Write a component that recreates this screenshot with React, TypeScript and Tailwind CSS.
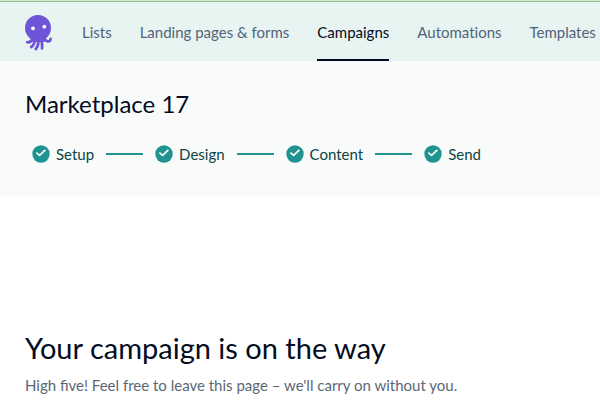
import { Fragment } from "react";
import { clsx } from "clsx";

const navigation = [
  { name: "Lists", href: "#lists" },
  { name: "Landing pages & forms", href: "#landing-pages" },
  { name: "Campaigns", href: "#campaigns" },
  { name: "Automations", href: "#automations" },
  { name: "Templates", href: "#templates" },
];

const steps = ["Setup", "Design", "Content", "Send"];

function OctopusLogo() {
  return (
    <svg viewBox="0 0 28 36" className="h-9 w-7" aria-hidden="true">
      <g stroke="#6e54d7" strokeWidth="2.8" strokeLinecap="round" strokeLinejoin="round" fill="none">
        <path d="M8.5 23.5C7.5 26.5 5.5 27.6 3.3 27.2" />
        <path d="M11 24C10.8 28 9.5 30.5 7.2 32" />
        <path d="M14.5 24C14.6 28.5 13.7 32 11.8 34" />
        <path d="M17.8 24C17.4 27.5 18.6 30.5 18 33.4" />
        <path d="M20.2 22C20.2 25.5 23.2 27 25.2 26.2C26.2 25.8 26.6 25 26.6 24" />
      </g>
      <path d="M6 20H22L20.5 27L8 27Z" fill="#6e54d7" />
      <circle cx="14" cy="13" r="13" fill="#6e54d7" />
      <circle cx="9" cy="13.3" r="1.9" fill="#fff" />
      <circle cx="20.3" cy="11.7" r="1.9" fill="#fff" />
    </svg>
  );
}

function StepCheck() {
  return (
    <svg viewBox="0 0 18 18" className="size-[18px] shrink-0" aria-hidden="true">
      <circle cx="9" cy="9" r="8.7" fill="#1f938f" />
      <path d="M4.4 7.6L7.6 10.4L13.4 4.9" fill="none" stroke="#fff" strokeWidth="1.7" />
    </svg>
  );
}

export default function App() {
  return (
    <div className="min-h-screen overflow-x-hidden bg-white font-['Lato',sans-serif] text-[#040c22]">
      <header className="border-t border-[#cfe8cf] bg-[#e7f4f2]">
        <div className="h-px bg-[#96bd98]" />
        <nav className="flex h-[59px] items-center gap-7 pl-6 whitespace-nowrap">
          <a href="#home" aria-label="Home" className="mr-0.5 shrink-0 pt-0.5">
            <OctopusLogo />
          </a>
          {navigation.map((item) => {
            const isActive = item.name === "Campaigns";
            return (
              <a
                key={item.name}
                href={item.href}
                aria-current={isActive ? "page" : undefined}
                className={clsx(
                  "flex h-full items-center border-b-2 pt-1 text-[15px] [font-variant-ligatures:none]",
                  isActive ? "border-[#040c22] text-[#040c22]" : "border-transparent text-[#526377]"
                )}
              >
                {item.name}
              </a>
            );
          })}
        </nav>
      </header>

      <section className="bg-[#f9fbfa] px-[25px] pt-[27px] pb-8">
        <h1 className="text-2xl leading-8">Marketplace 17</h1>
        <ol className="mt-6 flex items-center pl-[7px] text-[15px] leading-5 text-[#0d4444]">
          {steps.map((step, index) => (
            <Fragment key={step}>
              {index > 0 && <li role="presentation" className="mx-3 h-0.5 w-[37px] bg-[#1f938f]" />}
              <li className="flex items-center gap-1.5">
                <StepCheck />
                {step}
              </li>
            </Fragment>
          ))}
        </ol>
      </section>

      <main className="px-[25px] pt-[132px]">
        <h2 className="text-[29px] leading-10">Your campaign is on the way</h2>
        <p className="mt-[7px] text-[15px] leading-5 text-[#5b6776]">
          High five! Feel free to leave this page – we'll carry on without you.
        </p>
      </main>
    </div>
  );
}
